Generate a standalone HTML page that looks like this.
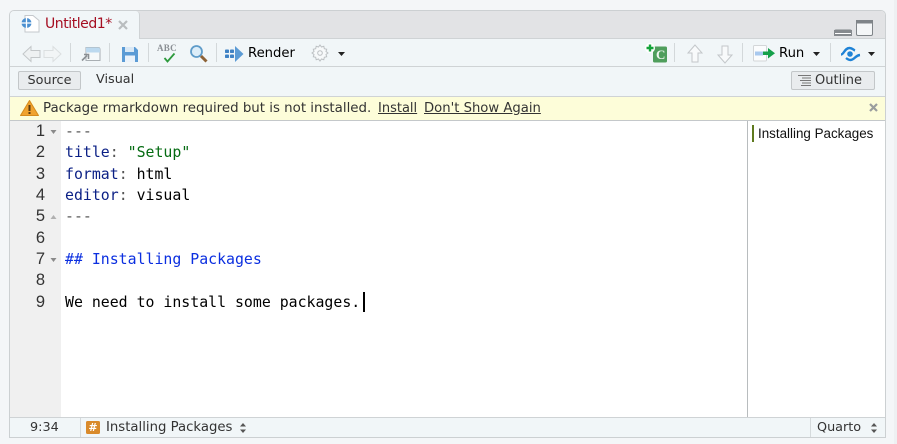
<!DOCTYPE html>
<html><head><meta charset="utf-8">
<style>
html,body{margin:0;padding:0;width:897px;height:444px;overflow:hidden;background:#f4f6f8;}
.a{position:absolute;white-space:pre;}
.ui{font-family:"DejaVu Sans","Liberation Sans",sans-serif;font-size:13px;line-height:16px;color:#333;}
.m{font-family:"DejaVu Sans Mono","Liberation Mono",monospace;font-size:14.87px;line-height:21px;left:65px;color:#000;}
.n{font-family:"Liberation Sans",sans-serif;font-size:16.5px;line-height:21px;color:#333;width:45px;text-align:right;left:0;}
.sep{position:absolute;width:1px;height:19px;top:43px;background:#d3d8da;}
svg{position:absolute;overflow:visible;}
</style></head>
<body>
<!-- panel -->
<div class="a" style="left:9px;top:10px;width:875px;height:426px;border:1px solid #ccd0d2;border-radius:5px 5px 0 0;background:#fff;overflow:hidden;">
  <div class="a" style="left:0;top:0;width:875px;height:27px;background:#e2e3e5;border-bottom:1px solid #cfd3d5;"></div>
  <div class="a" style="left:0;top:0;width:129px;height:28px;background:#f1f6f8;border-right:1px solid #cfd3d5;border-radius:4px 4px 0 0;"></div>
  <div class="a" style="left:0;top:28px;width:875px;height:27px;background:#f1f6f8;border-bottom:1px solid #cfd3d5;"></div>
  <div class="a" style="left:0;top:56px;width:875px;height:29px;background:#f1f6f8;border-bottom:1px solid #cfd3d5;"></div>
  <div class="a" style="left:0;top:86px;width:875px;height:23px;background:#fdfdd9;border-bottom:1px solid #c4c8ca;"></div>
  <div class="a" style="left:0;top:110px;width:51px;height:296px;background:#f0f0f0;"></div>
  <div class="a" style="left:737px;top:110px;width:1px;height:296px;background:#b8bcbe;"></div>
  <div class="a" style="left:0;top:406px;width:875px;height:19px;background:#f1f6f8;border-top:1px solid #cfd3d5;"></div>
  <div class="a" style="left:70px;top:407px;width:1px;height:19px;background:#d5dadc;"></div>
  <div class="a" style="left:800px;top:407px;width:1px;height:19px;background:#d5dadc;"></div>
</div>

<!-- tab -->
<svg style="left:20px;top:14px" width="21" height="20" viewBox="0 0 21 20">
  <path d="M5 1.500h8l6 5v11.500h-14z" fill="#fff" stroke="#c4c8cc"/>
  <circle cx="6.500" cy="9" r="5" fill="#4a8fd0"/>
  <path d="M6.500 4v10M1.500 9h10" stroke="#fff" stroke-width="1.300"/>
</svg>
<div class="a" style="left:45px;top:16px;font:14px/17px 'DejaVu Sans',sans-serif;color:#a50e22;letter-spacing:-.45px;">Untitled1*</div>
<svg style="left:118px;top:20px" width="10" height="10"><path d="M1 1l8 8M9 1l-8 8" stroke="#b9bdbf" stroke-width="2.200"/></svg>

<!-- min/max -->
<svg style="left:833px;top:19px" width="42" height="18">
  <path d="M1.500 15.500v-3q0-1.500 1.500-1.500h14q1.500 0 1.500 1.500v3z" fill="#fff" stroke="#7f8488" stroke-width="1"/>
  <rect x="1" y="11" width="18" height="3" fill="#868a8e"/>
  <rect x="1" y="15" width="18" height="2" fill="#868a8e"/>
  <rect x="23.500" y="1.500" width="16" height="15" rx="1.500" fill="#f4f6f7" stroke="#7f8488"/>
  <rect x="23" y="1" width="17" height="3.500" fill="#7f8488"/>
</svg>

<!-- toolbar left -->
<svg style="left:22px;top:45px" width="40" height="18">
  <path d="M9 1.500L1 9l8 7.500v-4h9v-7h-9z" fill="#eef1f2" stroke="#c3c7c9"/>
  <path d="M31 1.500L39 9l-8 7.500v-4h-9v-7h9z" fill="#f2f5f6" stroke="#dbdfe0"/>
</svg>
<div class="sep" style="left:70px"></div>
<svg style="left:81px;top:46px" width="20" height="16">
  <path d="M5 1.500h12q2 0 2 2v11h-14z" fill="#f6f9fa" stroke="#a9afb3"/>
  <path d="M5 1.500h12q2 0 2 2v3h-14z" fill="#bcd9ef"/>
  <path d="M1 14.500l5-5M3 8.500h4.500v4.500" fill="none" stroke="#8b9094" stroke-width="1.600"/>
</svg>
<div class="sep" style="left:109px"></div>
<svg style="left:121px;top:46px" width="18" height="17">
  <path d="M1 1h13l3 3v12h-16z" fill="#5b9bd5"/>
  <rect x="4" y="1" width="9" height="5" fill="#d9e8f5"/>
  <rect x="4" y="9.500" width="10" height="6.500" fill="#eaf2fa"/>
</svg>
<div class="sep" style="left:148px"></div>
<div class="a" style="left:157px;top:43px;font:bold 9px/11px 'Liberation Serif',serif;color:#8a8f94;letter-spacing:.3px;">ABC</div>
<svg style="left:163px;top:53px" width="13" height="10"><path d="M1.500 5l3 3.500 7-8" fill="none" stroke="#2d9a3d" stroke-width="1.800"/></svg>
<svg style="left:189px;top:44px" width="19" height="19">
  <circle cx="7.500" cy="7.500" r="5.500" fill="#dcedf8" stroke="#5f9cc9" stroke-width="1.800"/>
  <path d="M12 12l5.500 5.500" stroke="#8d6236" stroke-width="3"/>
</svg>
<div class="sep" style="left:216px"></div>
<svg style="left:225px;top:46px" width="19" height="16">
  <rect x="0" y="3.500" width="4" height="3.500" rx=".8" fill="#3f82c4"/>
  <rect x="0" y="8.500" width="4" height="3.500" rx=".8" fill="#3f82c4"/>
  <rect x="5" y="3.500" width="4" height="3.500" rx=".8" fill="#3f82c4"/>
  <rect x="5" y="8.500" width="4" height="3.500" rx=".8" fill="#3f82c4"/>
  <path d="M10 3.500v-3.500l8.500 8-8.500 8v-3.500z" fill="#5b9bd5"/>
</svg>
<div class="a ui" style="left:248px;top:46px;color:#000;font-size:13.200px;">Render</div>
<svg style="left:311px;top:44px" width="18" height="18">
  <path d="M9 1.500l1.500 2 2.300-.7.500 2.400 2.400.5-.7 2.300 2 1.500-2 1.500.7 2.300-2.400.5-.5 2.400-2.300-.7-1.500 2-1.500-2-2.300.7-.5-2.400-2.400-.5.7-2.300-2-1.500 2-1.500-.7-2.300 2.400-.5.500-2.400 2.300.7z" transform="translate(0 -.5)" fill="#f7f9fa" stroke="#bcc0c3"/>
  <circle cx="9" cy="9" r="2.300" fill="none" stroke="#bcc0c3"/>
</svg>
<svg style="left:338px;top:52px" width="7" height="5"><path d="M0 0h7l-3.500 4z" fill="#222"/></svg>

<!-- toolbar right -->
<svg style="left:644px;top:43px" width="24" height="20">
  <rect x="9" y="3.500" width="14" height="16" rx="1.500" fill="#4f9e5c"/>
  <circle cx="6" cy="5" r="5" fill="#fff"/>
  <path d="M6 1.500v7M2.500 5h7" stroke="#14a33a" stroke-width="2.400"/>
</svg>
<div class="a" style="left:656px;top:47px;font:bold 13px/15px 'Liberation Serif',serif;color:#eef6ef;">C</div>
<div class="sep" style="left:674px"></div>
<svg style="left:687px;top:44px" width="16" height="19"><path d="M8 1L1 9h4v9h6v-9h4z" fill="#f8fafb" stroke="#c3c7ca"/></svg>
<svg style="left:717px;top:45px" width="16" height="19"><path d="M8 18L1 10h4v-9h6v9h4z" fill="#f8fafb" stroke="#c3c7ca"/></svg>
<div class="sep" style="left:742px"></div>
<svg style="left:753px;top:45px" width="23" height="17">
  <rect x=".5" y=".5" width="13" height="15.500" rx="1" fill="#fbfcfd" stroke="#d3d6d8"/>
  <rect x="2" y="6.500" width="8" height="4" fill="#a9c9ee"/>
  <path d="M10 6.500h5v-3.500l7 5.300-7 5.200v-3.500h-5z" fill="#14a04a"/>
</svg>
<div class="a ui" style="left:779px;top:46px;color:#000;font-size:13.200px;">Run</div>
<svg style="left:813px;top:52px" width="7" height="5"><path d="M0 0h7l-3.500 4z" fill="#222"/></svg>
<div class="sep" style="left:830px"></div>
<svg style="left:840px;top:45px" width="21" height="17">
  <path d="M1 9.500c3 0 3.500-6.500 8.500-6.500 3 0 4 2 5.500 2.500" fill="none" stroke="#1f83d6" stroke-width="2.400"/>
  <path d="M6 13c1.500 1.200 2.500 2 4.500 2 4 0 4.500-4.500 9.500-5" fill="none" stroke="#1f83d6" stroke-width="2.400"/>
  <circle cx="10" cy="9" r="2.800" fill="#1f83d6"/>
</svg>
<svg style="left:868px;top:52px" width="7" height="5"><path d="M0 0h7l-3.500 4z" fill="#222"/></svg>

<!-- source row -->
<div class="a ui" style="left:18px;top:71px;width:63px;height:19px;box-sizing:border-box;background:#e9ecee;border:1px solid #c3c7c9;border-radius:2px;text-align:center;line-height:17px;font-size:12.800px;">Source</div>
<div class="a ui" style="left:96px;top:72px;font-size:12.800px;">Visual</div>
<div class="a ui" style="left:791px;top:71px;width:84px;height:19px;box-sizing:border-box;background:#e9ecee;border:1px solid #c3c7c9;border-radius:2px;line-height:17px;font-size:13px;padding-left:23px;">Outline</div>
<svg style="left:797px;top:75px" width="15" height="12"><path d="M1 .5h13M5 3h9M3 5.500h11M5 8h9M4 10.500h10" stroke="#777" stroke-width="1"/></svg>

<!-- warning -->
<svg style="left:20px;top:100px" width="19" height="16">
  <path d="M9.500 0.500L18.500 15.500H.5z" fill="#f0a22e" stroke="#d58a1c" stroke-linejoin="round"/>
  <rect x="8.500" y="5" width="2" height="6" fill="#5a3a10"/><rect x="8.500" y="12" width="2" height="2" fill="#5a3a10"/>
</svg>
<div class="a ui" style="left:43px;top:101px;font-size:13.370px;">Package rmarkdown required but is not installed.</div>
<div class="a ui" style="left:378px;top:101px;font-size:13px;text-decoration:underline;">Install</div>
<div class="a ui" style="left:424px;top:101px;font-size:13.200px;text-decoration:underline;">Don't Show Again</div>
<svg style="left:869px;top:103px" width="9" height="9"><path d="M1 1l7 7M8 1l-7 7" stroke="#9a9d9e" stroke-width="2.200"/></svg>

<!-- gutter -->
<div class="a n" style="top:121px">1</div>
<div class="a n" style="top:142px">2</div>
<div class="a n" style="top:163.500px">3</div>
<div class="a n" style="top:185px">4</div>
<div class="a n" style="top:206px">5</div>
<div class="a n" style="top:227.500px">6</div>
<div class="a n" style="top:249px">7</div>
<div class="a n" style="top:270px">8</div>
<div class="a n" style="top:291.500px">9</div>
<svg style="left:50px;top:130px" width="7" height="5"><path d="M.5 0h6l-3 4z" fill="#8a8a8a"/></svg>
<svg style="left:50px;top:215px" width="7" height="5"><path d="M.5 4h6l-3-4z" fill="#b0b0b0"/></svg>
<svg style="left:50px;top:258px" width="7" height="5"><path d="M.5 0h6l-3 4z" fill="#8a8a8a"/></svg>

<!-- code -->
<div class="a m" style="top:121px;color:#555;">---</div>
<div class="a m" style="top:142px;"><span style="color:#0a1f85">title</span><span style="color:#555">:</span> <span style="color:#056b12">"Setup"</span></div>
<div class="a m" style="top:163.500px;"><span style="color:#0a1f85">format</span><span style="color:#555">:</span> html</div>
<div class="a m" style="top:185px;"><span style="color:#0a1f85">editor</span><span style="color:#555">:</span> visual</div>
<div class="a m" style="top:206px;color:#555;">---</div>
<div class="a m" style="top:249px;color:#0b2fe0;">## Installing Packages</div>
<div class="a m" style="top:291.500px;">We need to install some packages.</div>
<div class="a" style="left:363px;top:292px;width:1.500px;height:20px;background:#000;"></div>

<!-- outline -->
<div class="a" style="left:752px;top:125px;width:2px;height:17px;background:#5f7a1e;"></div>
<div class="a" style="left:758px;top:125px;font:13.400px/17px 'Liberation Sans',sans-serif;color:#111;">Installing Packages</div>

<!-- status -->
<div class="a ui" style="left:30px;top:419px;font-size:12.800px;line-height:17px;">9:34</div>
<div class="a" style="left:86px;top:421px;width:14px;height:13px;background:#d98a2b;border-radius:1.500px;color:#fff;font:bold 11px/13px 'DejaVu Sans',sans-serif;text-align:center;">#</div>
<div class="a ui" style="left:106px;top:419px;font-size:13.250px;line-height:17px;">Installing Packages</div>
<svg style="left:240px;top:423px" width="6" height="10"><path d="M3 0l3 3.500H0zM3 10l3-3.500H0z" fill="#555"/></svg>
<div class="a ui" style="left:817px;top:419px;font-size:12.800px;line-height:17px;">Quarto</div>
<svg style="left:871px;top:423px" width="6" height="10"><path d="M3 0l3 3.500H0zM3 10l3-3.500H0z" fill="#555"/></svg>

<div class="a" style="left:894px;top:0;width:3px;height:444px;background:#eef0f2;"></div>
</body></html>
